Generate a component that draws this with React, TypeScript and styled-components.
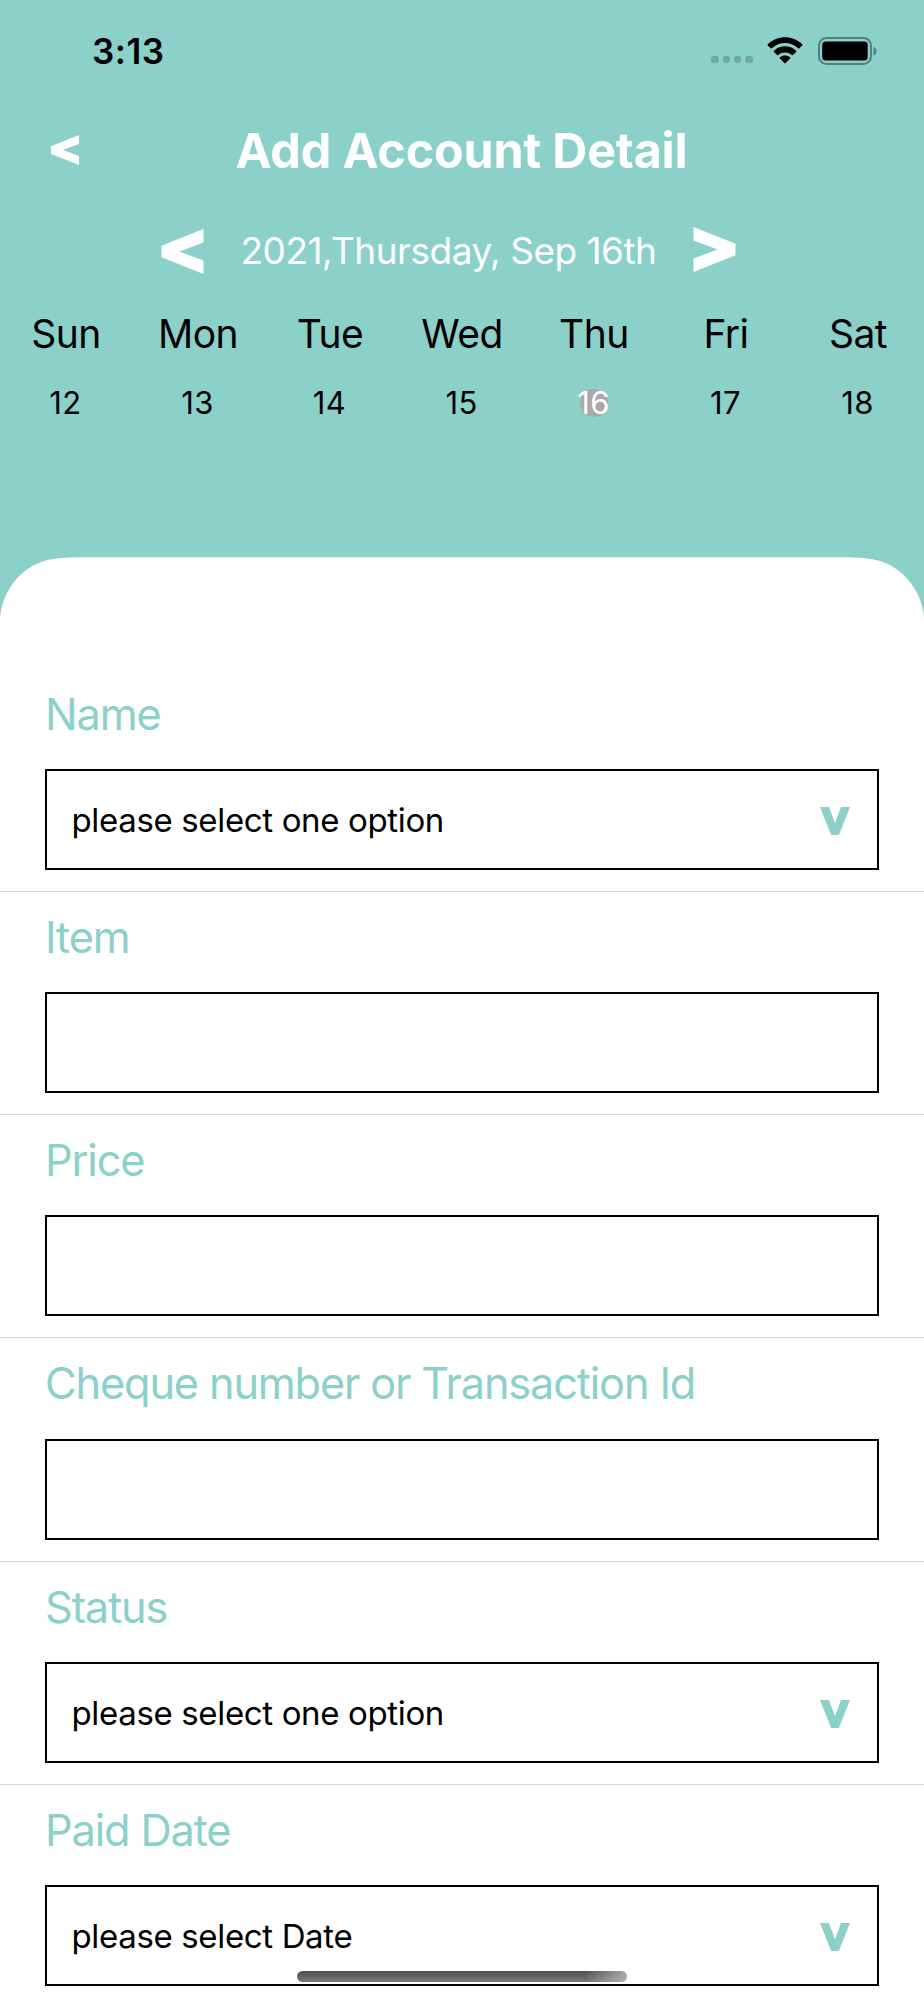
import React from "react";
import styled, { createGlobalStyle } from "styled-components";

const TEAL = "#8bd1c9";

const GlobalStyle = createGlobalStyle`
  *, *::before, *::after { box-sizing: border-box; }
  html, body { margin: 0; padding: 0; background: #fff; }
  body { font-family: Inter, "Liberation Sans", sans-serif; font-kerning: normal; }
`;

const Screen = styled.div`
  position: relative;
  width: 924px;
  height: 2000px;
  overflow: hidden;
  display: flex;
  flex-direction: column;
  background: ${TEAL};
  color: #000;
`;

const StatusBar = styled.div`
  flex: none;
  height: 101px;
  padding: 0 47.5px 0 92px;
  display: flex;
  align-items: center;
  justify-content: space-between;
`;

const Clock = styled.span`
  font-size: 35px;
  font-weight: 600;
  letter-spacing: 0.5px;
`;

const StatusIcons = styled.div`
  display: flex;
  align-items: center;
`;

const SignalDots = styled.div`
  display: flex;
  gap: 3.6px;
  margin: 18px 14.5px 0 0;
`;

const Dot = styled.i`
  width: 7.6px;
  height: 7.6px;
  border-radius: 2.4px;
  background: #6fa7a1;
`;

const WifiSvg = styled.svg`
  width: 36px;
  height: 27px;
  margin-right: 14.5px;
`;

const BatterySvg = styled.svg`
  width: 59px;
  height: 28px;
`;

const TitleBar = styled.header`
  flex: none;
  height: 99.5px;
  padding: 0 51px 0 50px;
  display: grid;
  grid-template-columns: 60px 1fr 60px;
  align-items: center;
`;

const Title = styled.h1`
  margin: 0;
  font-size: 48.5px;
  font-weight: 700;
  letter-spacing: -0.2px;
  line-height: 60px;
  color: #fff;
  text-align: center;
  white-space: nowrap;
`;

const IconButton = styled.button`
  border: 0;
  padding: 0;
  background: none;
  display: flex;
  align-items: center;
`;

const BackButton = styled(IconButton)`
  padding-bottom: 1px;
`;

const ChevronSvg = styled.svg<{ $size: number; $turn: number }>`
  display: block;
  width: ${(p) => p.$size}px;
  height: ${(p) => p.$size}px;
  transform: rotate(${(p) => p.$turn}deg);
`;

const DateBar = styled.div`
  flex: none;
  height: 101.5px;
  padding: 0 187px 0 160px;
  display: flex;
  align-items: center;
  justify-content: space-between;
`;

const NextButton = styled(IconButton)`
  padding-bottom: 4px;
`;

const DateText = styled.span`
  padding-bottom: 1px;
  font-size: 37px;
  letter-spacing: -0.5px;
  color: #fff;
  white-space: nowrap;
`;

const Week = styled.div`
  flex: none;
  display: grid;
  grid-template-columns: repeat(7, 1fr);
  grid-template-rows: 63px 75px;
  grid-auto-flow: column;
  justify-items: center;
  align-items: center;
`;

const WeekDay = styled.span`
  font-size: 39px;
  letter-spacing: -0.5px;
`;

const DayNumber = styled.span<{ $selected: boolean }>`
  width: 28px;
  height: 28px;
  margin-right: 1px;
  border-radius: 50%;
  display: flex;
  align-items: center;
  justify-content: center;
  font-size: 31px;
  letter-spacing: 0.4px;
  color: ${(p) => (p.$selected ? "#fff" : "#000")};
  background: ${(p) => (p.$selected ? "#a9a9a9" : "transparent")};
`;

const Sheet = styled.main`
  flex: 1;
  margin-top: 117px;
  padding-top: 111.5px;
  background: #fff;
  clip-path: path("M0 60.500C2 36 19 10.500 47 3.300C58 0.600 72 0.300 88 0.300H836C852 0.300 866 0.600 877 3.300C905 10.500 922 36 924 60.500V1500H0Z");
`;

const Field = styled.div`
  height: 223.33px;
  padding: 16px 45px 0;
  border-bottom: 1px solid #d4d6d6;
`;

const Label = styled.label`
  display: block;
  height: 84.3px;
  line-height: 58px;
  font-size: 43.3px;
  letter-spacing: -1.15px;
  color: ${TEAL};
  white-space: nowrap;
`;

const InputBox = styled.div`
  height: 101px;
  padding: 0 27.5px 0 24.5px;
  border: 2px solid #000;
  display: flex;
  align-items: center;
  justify-content: space-between;

  svg {
    margin-top: 3px;
  }
`;

const Value = styled.span`
  padding-top: 1px;
  font-size: 33px;
  letter-spacing: -0.35px;
  white-space: nowrap;
`;

const HomeIndicator = styled.div`
  position: absolute;
  left: 297px;
  top: 1971px;
  width: 330px;
  height: 11px;
  border-radius: 6px;
  background: linear-gradient(100deg, transparent 87%, rgba(190, 190, 190, 0.8)),
    linear-gradient(#505050, #777);
`;

function Chevron({ size, turn, color = "#fff" }: { size: number; turn: number; color?: string }) {
  return (
    <ChevronSvg $size={size} $turn={turn} viewBox="0 0 30 30" aria-hidden>
      <path fill={color} d="M0 1H9L15 17.2L21 1H30L18.9 29H11.2Z" />
    </ChevronSvg>
  );
}

const week = [
  ["Sun", 12],
  ["Mon", 13],
  ["Tue", 14],
  ["Wed", 15],
  ["Thu", 16],
  ["Fri", 17],
  ["Sat", 18],
] as const;

const fields: { label: string; value?: string }[] = [
  { label: "Name", value: "please select one option" },
  { label: "Item" },
  { label: "Price" },
  { label: "Cheque number or Transaction Id" },
  { label: "Status", value: "please select one option" },
  { label: "Paid Date", value: "please select Date" },
];

export default function App() {
  return (
    <>
      <GlobalStyle />
      <Screen>
        <StatusBar>
          <Clock>3:13</Clock>
          <StatusIcons>
            <SignalDots>
              <Dot />
              <Dot />
              <Dot />
              <Dot />
            </SignalDots>
            <WifiSvg viewBox="0 0 36 27">
              <path d="M.8 7.2C10.500-2.100 25.500-2.100 35.200 7.200Q35.800 7.900 35.200 8.500L32.300 11.200Q31.700 11.700 31.100 11.200C23.500 4.200 12.500 4.200 4.900 11.200Q4.300 11.700 3.700 11.200L.8 8.500Q.2 7.900 .8 7.200Z" />
              <path d="M6.900 13.700C13.200 7.900 22.800 7.900 29.100 13.700Q29.700 14.400 29.100 15L26.200 17.800Q25.500 18.400 24.900 17.900C21 14.600 15 14.600 11.100 17.900Q10.500 18.400 9.800 17.800L6.900 15Q6.300 14.400 6.900 13.700Z" />
              <path d="M13 20.200C15.800 17.900 20.200 17.900 23 20.200Q23.700 20.900 23 21.600L18.700 26Q18 26.600 17.300 26L13 21.600Q12.300 20.900 13 20.200Z" />
            </WifiSvg>
            <BatterySvg viewBox="0 0 59 28">
              <rect x="1" y="1" width="52" height="26" rx="7.500" fill="none" stroke="#54807b" strokeWidth="2" />
              <rect x="4.200" y="4.500" width="45.500" height="19" rx="3.500" />
              <path d="M55.500 9.500Q58.700 11.200 58.700 14T55.500 18.500Z" fill="#54807b" />
            </BatterySvg>
          </StatusIcons>
        </StatusBar>

        <TitleBar>
          <BackButton aria-label="Back">
            <Chevron size={30} turn={90} />
          </BackButton>
          <Title>Add Account Detail</Title>
        </TitleBar>

        <DateBar>
          <IconButton aria-label="Previous">
            <Chevron size={45} turn={90} />
          </IconButton>
          <DateText>2021,Thursday, Sep 16th</DateText>
          <NextButton aria-label="Next">
            <Chevron size={45} turn={-90} />
          </NextButton>
        </DateBar>

        <Week>
          {week.map(([day, date]) => (
            <React.Fragment key={day}>
              <WeekDay>{day}</WeekDay>
              <DayNumber $selected={date === 16}>{date}</DayNumber>
            </React.Fragment>
          ))}
        </Week>

        <Sheet>
          {fields.map(({ label, value }) => (
            <Field key={label}>
              <Label>{label}</Label>
              <InputBox>
                {value && (
                  <>
                    <Value>{value}</Value>
                    <Chevron size={30} turn={0} color={TEAL} />
                  </>
                )}
              </InputBox>
            </Field>
          ))}
        </Sheet>
        <HomeIndicator />
      </Screen>
    </>
  );
}
